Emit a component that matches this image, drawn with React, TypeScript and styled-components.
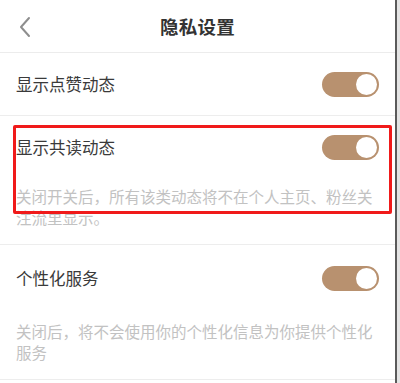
import React from "react";
import styled, { createGlobalStyle } from "styled-components";

const Global = createGlobalStyle`
  html, body { margin: 0; padding: 0; background: #e4e4e4; }
  body { font-family: "Noto Sans CJK SC", "Noto Sans", sans-serif; }
`;

const Screen = styled.div`
  width: 395px;
  height: 383px;
  background: #fff;
  border-right: 2px solid #5a5a5a;
  overflow: hidden;
`;

const Header = styled.header`
  height: 52px;
  display: flex;
  align-items: center;
  justify-content: center;
  position: relative;
  border-bottom: 1px solid #ececec;
`;

const Back = styled.button`
  position: absolute;
  left: 14px;
  top: 14px;
  width: 22px;
  height: 26px;
  padding: 0;
  border: none;
  background: none;
  display: flex;
  align-items: center;
  justify-content: center;
`;

const Title = styled.h1`
  margin: 0;
  font-size: 18.5px;
  font-weight: 600;
  color: #333;
  letter-spacing: 0.3px;
`;

const Section = styled.section<{ $pt?: number; $pb?: number }>`
  position: relative;
  padding: ${(p) => p.$pt ?? 0}px 16px ${(p) => p.$pb ?? 0}px;
  border-bottom: 1px solid #ededed;
`;

const RowHead = styled.div`
  height: 62px;
  display: flex;
  align-items: center;
  justify-content: space-between;
`;

const Label = styled.span`
  font-size: 16.5px;
  color: #3a3a3a;
`;

const Desc = styled.p<{ $mt: number }>`
  margin: ${(p) => p.$mt}px 0 0;
  font-size: 15.5px;
  line-height: 21px;
  color: #c2c2c2;
`;

const Toggle = styled.span`
  width: 57px;
  height: 25px;
  border-radius: 13px;
  background: #b8916f;
  position: relative;
  display: inline-block;
  &::after {
    content: "";
    position: absolute;
    right: 2.5px;
    top: 2px;
    width: 21px;
    height: 21px;
    border-radius: 50%;
    background: #fff;
  }
`;

const Highlight = styled.div`
  position: absolute;
  left: 13px;
  top: 9px;
  width: 373px;
  height: 83px;
  border: 3px solid #f01a1a;
  border-radius: 2px;
  pointer-events: none;
`;

export default function App() {
  return (
    <>
      <Global />
      <Screen>
        <Header>
          <Back aria-label="返回">
            <svg width="14" height="22" viewBox="0 0 14 22">
              <polyline
                points="11,2 3,11 11,20"
                fill="none"
                stroke="#8e8e8e"
                strokeWidth="2"
                strokeLinecap="round"
                strokeLinejoin="round"
              />
            </svg>
          </Back>
          <Title>隐私设置</Title>
        </Header>
        <Section>
          <RowHead>
            <Label>显示点赞动态</Label>
            <Toggle />
          </RowHead>
        </Section>
        <Section $pb={16}>
          <RowHead>
            <Label>显示共读动态</Label>
            <Toggle />
          </RowHead>
          <Desc $mt={8}>关闭开关后，所有该类动态将不在个人主页、粉丝关注流里显示。</Desc>
          <Highlight />
        </Section>
        <Section $pt={2} $pb={16}>
          <RowHead>
            <Label>个性化服务</Label>
            <Toggle />
          </RowHead>
          <Desc $mt={12}>关闭后，将不会使用你的个性化信息为你提供个性化服务</Desc>
        </Section>
      </Screen>
    </>
  );
}
